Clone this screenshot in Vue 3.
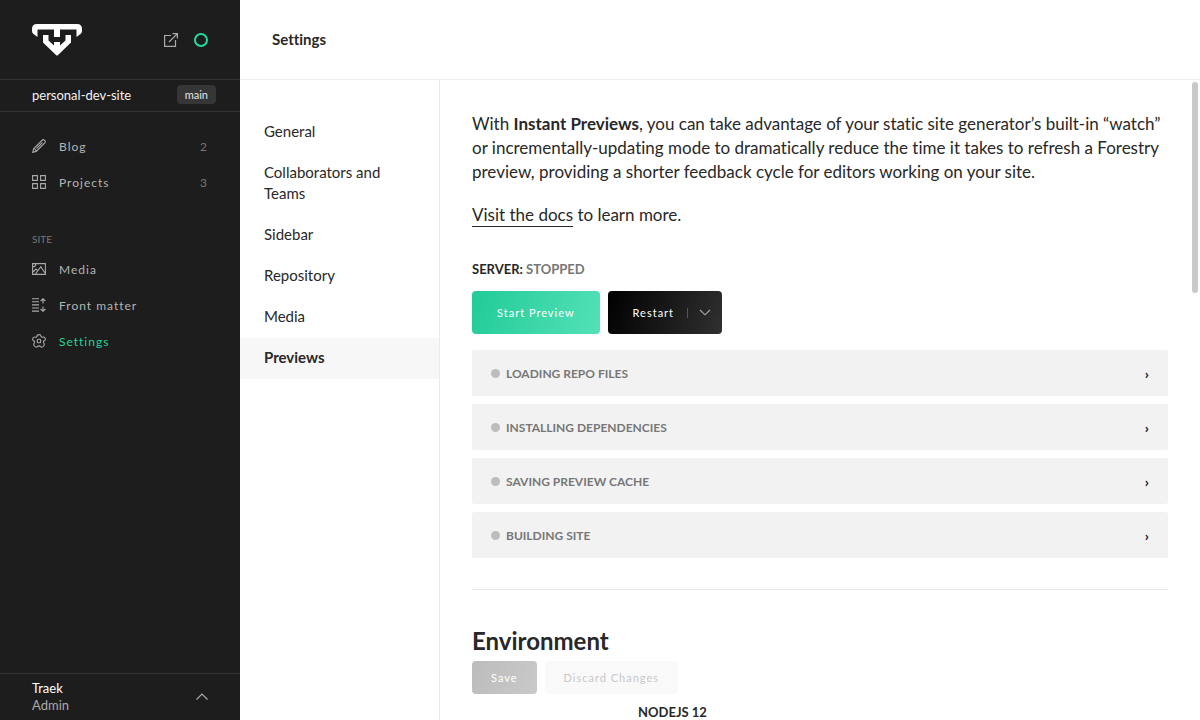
<script setup>
const content = [
  { label: 'Blog', count: 2, icon: 'pencil' },
  { label: 'Projects', count: 3, icon: 'grid' },
]
const site = [
  { label: 'Media', icon: 'image' },
  { label: 'Front matter', icon: 'matter' },
  { label: 'Settings', icon: 'gear', active: true },
]
const sections = ['General', 'Collaborators and Teams', 'Sidebar', 'Repository', 'Media', 'Previews']
const steps = ['Loading repo files', 'Installing dependencies', 'Saving preview cache', 'Building site']
</script>

<template>
  <div class="app">
    <aside class="sidebar">
      <header class="brand">
        <svg class="logo" width="50" height="32" viewBox="0 0 50 32" role="img" aria-label="Forestry" fill="#fff">
          <path d="M5 0H45Q50 0 50 5V7Q50 9 48.5 10L44.5 13V5.6H28V13H22V5.6H5.5V13L1.5 10Q0 9 0 7V5Q0 0 5 0Z" />
          <path d="M11 11H16.5V16.5L22 21.5V18H28V21.5L33.5 16.5V11H39V18.5L26 31Q25 32 24 31L11 18.5Z" />
        </svg>
        <div class="tools">
          <a href="#" aria-label="Open site">
            <svg width="16" height="16" viewBox="0 0 16 16" fill="none" stroke="#aaa" stroke-width="1.2">
              <path d="M8 3.5H1.6V14.4H12.5V8M6 10L14.2 1.8M9.5 1.6H14.4V6.5" />
            </svg>
          </a>
          <button class="status" type="button" aria-label="Site status"></button>
        </div>
      </header>
      <div class="project">
        <span>personal-dev-site</span>
        <span class="branch">main</span>
      </div>
      <nav class="nav" aria-label="Main">
        <template v-for="(group, g) in [content, site]" :key="g">
          <h2 v-if="g === 1">SITE</h2>
          <a v-for="item in group" :key="item.label" href="#" :class="{ active: item.active }">
            <svg width="14" height="14" viewBox="0 0 14 14" fill="none" stroke="#aaa" stroke-width="1.1" aria-hidden="true">
              <path v-if="item.icon === 'pencil'" d="M.7 13.3L1.6 9.8L10.4 1Q11.4 .2 12.6 1.4Q13.8 2.6 13 3.6L4.2 12.4ZM1.6 9.8Q3.8 10 4.2 12.4M4.4 9.6L10.4 3.6" />
              <path v-else-if="item.icon === 'grid'" d="M.6 .6H5.4V5.4H.6ZM8.6 .6H13.4V5.4H8.6ZM.6 8.6H5.4V13.4H.6ZM8.6 8.6H13.4V13.4H8.6Z" />
              <path v-else-if="item.icon === 'image'" d="M.6 1.6H13.4V12.4H.6ZM1 10L4 7L5.8 8.6M3.4 12L8.8 4.6L13 11M1 4.8Q3.8 4.8 3.8 2" />
              <path v-else-if="item.icon === 'matter'" d="M0 .7H7M0 3.8H7M0 6.9H7M0 10H7M0 13.1H7M11 1V5.6M8.6 3L11 .8L13.4 3M11 8.4V13M8.6 11L11 13.2L13.4 11" />
              <g v-else>
                <path d="M5 2.2Q5 .6 7 .6T9 2.2Q9.2 3.4 10.4 3.2Q12.6 2.6 13.2 4.4Q13.8 6 12.2 6.8Q11 7.4 11.6 8.6Q12.8 10.6 11.6 12Q10 13.8 8.6 12.6Q7 11.2 5.4 12.6Q4 13.8 2.4 12Q1.2 10.6 2.4 8.6Q3 7.4 1.8 6.8Q.2 6 .8 4.4Q1.4 2.6 3.6 3.2Q4.8 3.4 5 2.2Z" />
                <rect x="5.3" y="5.3" width="3.4" height="3.4" rx="1" />
              </g>
            </svg>
            <span>{{ item.label }}</span>
            <span v-if="item.count" class="count">{{ item.count }}</span>
          </a>
        </template>
      </nav>
      <button class="user" type="button">
        <span class="who"><span class="name">Traek</span><span>Admin</span></span>
        <svg width="12" height="8" viewBox="0 0 12 8" fill="none" stroke="#aaa" stroke-width="1.2" aria-hidden="true"><path d="M.5 6.5L6 1L11.5 6.5" /></svg>
      </button>
    </aside>

    <div class="page">
      <header class="title"><h1>Settings</h1></header>
      <div class="body">
        <nav class="sections" aria-label="Settings">
          <a v-for="s in sections" :key="s" href="#" :class="{ current: s === 'Previews' }">{{ s }}</a>
        </nav>
        <main class="main">
          <p>With <strong>Instant Previews</strong>, you can take advantage of your static site generator’s built-in “watch” or incrementally-updating mode to dramatically reduce the time it takes to refresh a Forestry preview, providing a shorter feedback cycle for editors working on your site.</p>
          <p><a class="docs" href="#">Visit the docs</a> to learn more.</p>
          <h3 class="server">SERVER: <span>STOPPED</span></h3>
          <div class="row">
            <button class="btn start" type="button">Start Preview</button>
            <div class="split">
              <button class="btn" type="button">Restart</button>
              <button class="more" type="button" aria-label="More restart options">
                <svg width="12" height="7" viewBox="0 0 12 7" fill="none" stroke="#aaa" stroke-width="1.1" aria-hidden="true"><path d="M1 1L6 5.8L11 1" /></svg>
              </button>
            </div>
          </div>
          <div class="steps">
            <button v-for="s in steps" :key="s" type="button" class="step">
              <i class="dot"></i><span>{{ s.toUpperCase() }}</span><b class="arrow" aria-hidden="true">›</b>
            </button>
          </div>
          <section class="env">
            <h2>Environment</h2>
            <div class="row">
              <button class="small save" type="button" disabled>Save</button>
              <button class="small discard" type="button" disabled>Discard Changes</button>
            </div>
            <h3>NODEJS 12</h3>
          </section>
        </main>
        <div class="thumb" aria-hidden="true"></div>
      </div>
    </div>
  </div>
</template>

<style>
body { overflow: hidden; }
</style>

<style scoped>
* { box-sizing: border-box; }
.app { display: flex; height: 100vh; font-family: Lato, "Open Sans", sans-serif; font-variant-ligatures: none; color: #282828; background: #fff; }
a { color: inherit; text-decoration: none; }
button { font: inherit; font-variant-ligatures: none; color: inherit; border: 0; background: none; padding: 0; cursor: pointer; }
h1, h2, h3, p { margin: 0; }
svg { display: block; flex: none; }

.sidebar { flex: none; width: 240px; display: flex; flex-direction: column; background: #1d1d1d; color: #b4b4b4; }
.brand { height: 80px; padding: 0 32px; display: flex; align-items: center; justify-content: space-between; border-bottom: 1px solid #343434; }
.tools { display: flex; align-items: center; gap: 15px; }
.status { width: 14px; height: 14px; border: 2px solid #22dba0; border-radius: 50%; }
.project { height: 32px; padding: 0 24px 2px 32px; display: flex; align-items: center; justify-content: space-between; border-bottom: 1px solid #343434; font-size: 13px; color: #f2f2f2; }
.branch { padding: 0 8px; line-height: 19px; border-radius: 4px; background: #363636; color: #e4e4e4; font-size: 11px; }
.nav { flex: 1; padding: 16px 32px; }
.nav a { height: 36px; display: flex; align-items: center; gap: 13px; font-size: 12px; letter-spacing: 1px; }
.nav .count { margin-left: auto; color: #777; }
.nav .active { color: #22d697; }
.nav h2 { margin: 31px 0 4px; line-height: 16px; font-size: 10px; font-weight: 400; color: #777; }
.user { height: 47px; padding: 0 32px; display: flex; align-items: center; justify-content: space-between; border-top: 1px solid #343434; text-align: left; font-size: 13px; line-height: 17px; color: #aaa; }
.who span { display: block; }
.who .name { color: #fff; }

.page { flex: 1; min-width: 0; display: flex; flex-direction: column; }
.title { flex: none; height: 80px; padding: 0 32px 2px; display: flex; align-items: center; border-bottom: 1px solid #efefef; }
.title h1 { font-size: 15px; font-weight: 700; }
.body { flex: 1; min-height: 0; display: flex; position: relative; }
.sections { flex: none; width: 200px; padding-top: 32px; border-right: 1px solid #eaeaea; }
.sections a { display: block; padding: 9px 24px 11px; font-size: 15px; line-height: 21px; }
.sections .current { background: #f7f7f7; font-weight: 700; }

.main { flex: 1; min-width: 0; padding: 32px; overflow: hidden; }
.main p { font-size: 17px; line-height: 24px; margin-bottom: 19px; }
.docs { padding-bottom: 1px; border-bottom: 1px solid #282828; }
.server { margin: 32px 0 12px; font-size: 13px; line-height: 20px; font-weight: 700; }
.server span { color: #777; }
.row { display: flex; gap: 8px; }
.btn { height: 43px; padding: 0 25px; border-radius: 4px; color: #fff; font-size: 11px; letter-spacing: 1px; }
.start { background: linear-gradient(110deg, #21cb98, #54e1b8); }
.split { display: flex; align-items: center; border-radius: 4px; background: linear-gradient(110deg, #000, #303030); }
.split .btn { padding-right: 13px; }
.more { height: 10px; padding: 0 11px; border-left: 1px solid #555; }
.steps { display: flex; flex-direction: column; gap: 8px; margin: 16px 0 31px; }
.step { height: 46px; padding: 0 19px; display: flex; align-items: center; border-radius: 2px; background: #f2f2f2; color: #777; font-size: 12px; font-weight: 700; }
.dot { width: 9px; height: 9px; margin-right: 6px; border-radius: 50%; background: #bdbdbd; }
.arrow { margin-left: auto; color: #282828; font-size: 14px; }
.env { border-top: 1px solid #e8e8e8; padding-top: 35px; }
.env h2 { font-size: 24px; line-height: 32px; margin-bottom: 4px; font-weight: 700; }
.small { height: 33px; padding: 0 19px; border-radius: 4px; font-size: 11px; letter-spacing: 1px; }
.save { background: linear-gradient(110deg, #bcbcbc, #c9c9c9); color: #fff; }
.discard { background: #f9f9f9; color: #c8c8c8; }
.env h3 { margin: 8px 0 0 166px; font-size: 13px; line-height: 20px; }
.thumb { position: absolute; top: 2px; right: 2px; width: 6px; height: 33%; border-radius: 3px; background: #c9c9c9; }
</style>
